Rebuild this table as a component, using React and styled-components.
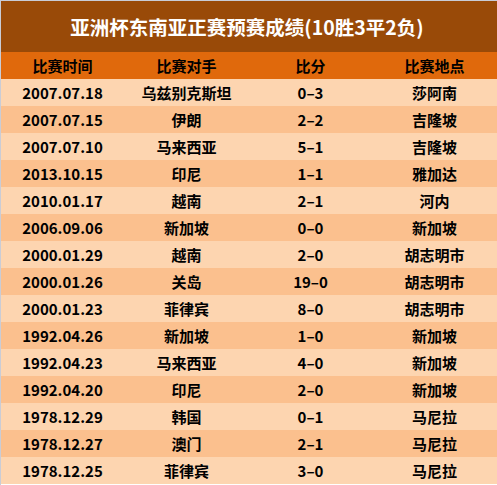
import React from "react"
import styled, { createGlobalStyle } from "styled-components"

const GlobalStyle = createGlobalStyle`
  html, body {
    margin: 0;
    padding: 0;
    background: #fff;
  }
  body {
    font-family: "Noto Sans CJK SC", "Noto Sans", sans-serif;
  }
`

const rows = [
  ["2007.07.18", "乌兹别克斯坦", "0-3", "莎阿南"],
  ["2007.07.15", "伊朗", "2-2", "吉隆坡"],
  ["2007.07.10", "马来西亚", "5-1", "吉隆坡"],
  ["2013.10.15", "印尼", "1-1", "雅加达"],
  ["2010.01.17", "越南", "2-1", "河内"],
  ["2006.09.06", "新加坡", "0-0", "新加坡"],
  ["2000.01.29", "越南", "2-0", "胡志明市"],
  ["2000.01.26", "关岛", "19-0", "胡志明市"],
  ["2000.01.23", "菲律宾", "8-0", "胡志明市"],
  ["1992.04.26", "新加坡", "1-0", "新加坡"],
  ["1992.04.23", "马来西亚", "4-0", "新加坡"],
  ["1992.04.20", "印尼", "2-0", "新加坡"],
  ["1978.12.29", "韩国", "0-1", "马尼拉"],
  ["1978.12.27", "澳门", "2-1", "马尼拉"],
  ["1978.12.25", "菲律宾", "3-0", "马尼拉"],
]

const Table = styled.div`
  width: 497px;
  height: 485px;
  box-sizing: border-box;
  border-top: 1px solid #c9ccd6;
  border-left: 1px solid #c9ccd6;
  display: flex;
  flex-direction: column;
  overflow: hidden;
`

const Title = styled.div`
  height: 51px;
  background-color: #994a08;
  color: #fff;
  font-size: 19.5px;
  font-weight: bold;
  display: flex;
  align-items: center;
  justify-content: center;
  padding-right: 4px;
`

const Row = styled.div`
  height: 27px;
  display: grid;
  grid-template-columns: 123px 125px 123px 1fr;
  align-items: center;
  background-color: ${props =>
    props.head ? "#e0690c" : props.alt ? "#fbc08e" : "#fdd5b0"};
  color: #000;
  font-size: 15px;
  font-weight: bold;
`

const Cell = styled.div`
  text-align: center;
  white-space: nowrap;
  line-height: 27px;
`

const App = () => (
  <>
    <GlobalStyle />
    <Table>
      <Title>亚洲杯东南亚正赛预赛成绩(10胜3平2负)</Title>
      <Row head>
        <Cell>比赛时间</Cell>
        <Cell>比赛对手</Cell>
        <Cell>比分</Cell>
        <Cell>比赛地点</Cell>
      </Row>
      {rows.map((r, i) => (
        <Row key={i} alt={i % 2 === 1}>
          {r.map((c, j) => (
            <Cell key={j}>{c.replace("-", "–")}</Cell>
          ))}
        </Row>
      ))}
    </Table>
  </>
)

export default App
